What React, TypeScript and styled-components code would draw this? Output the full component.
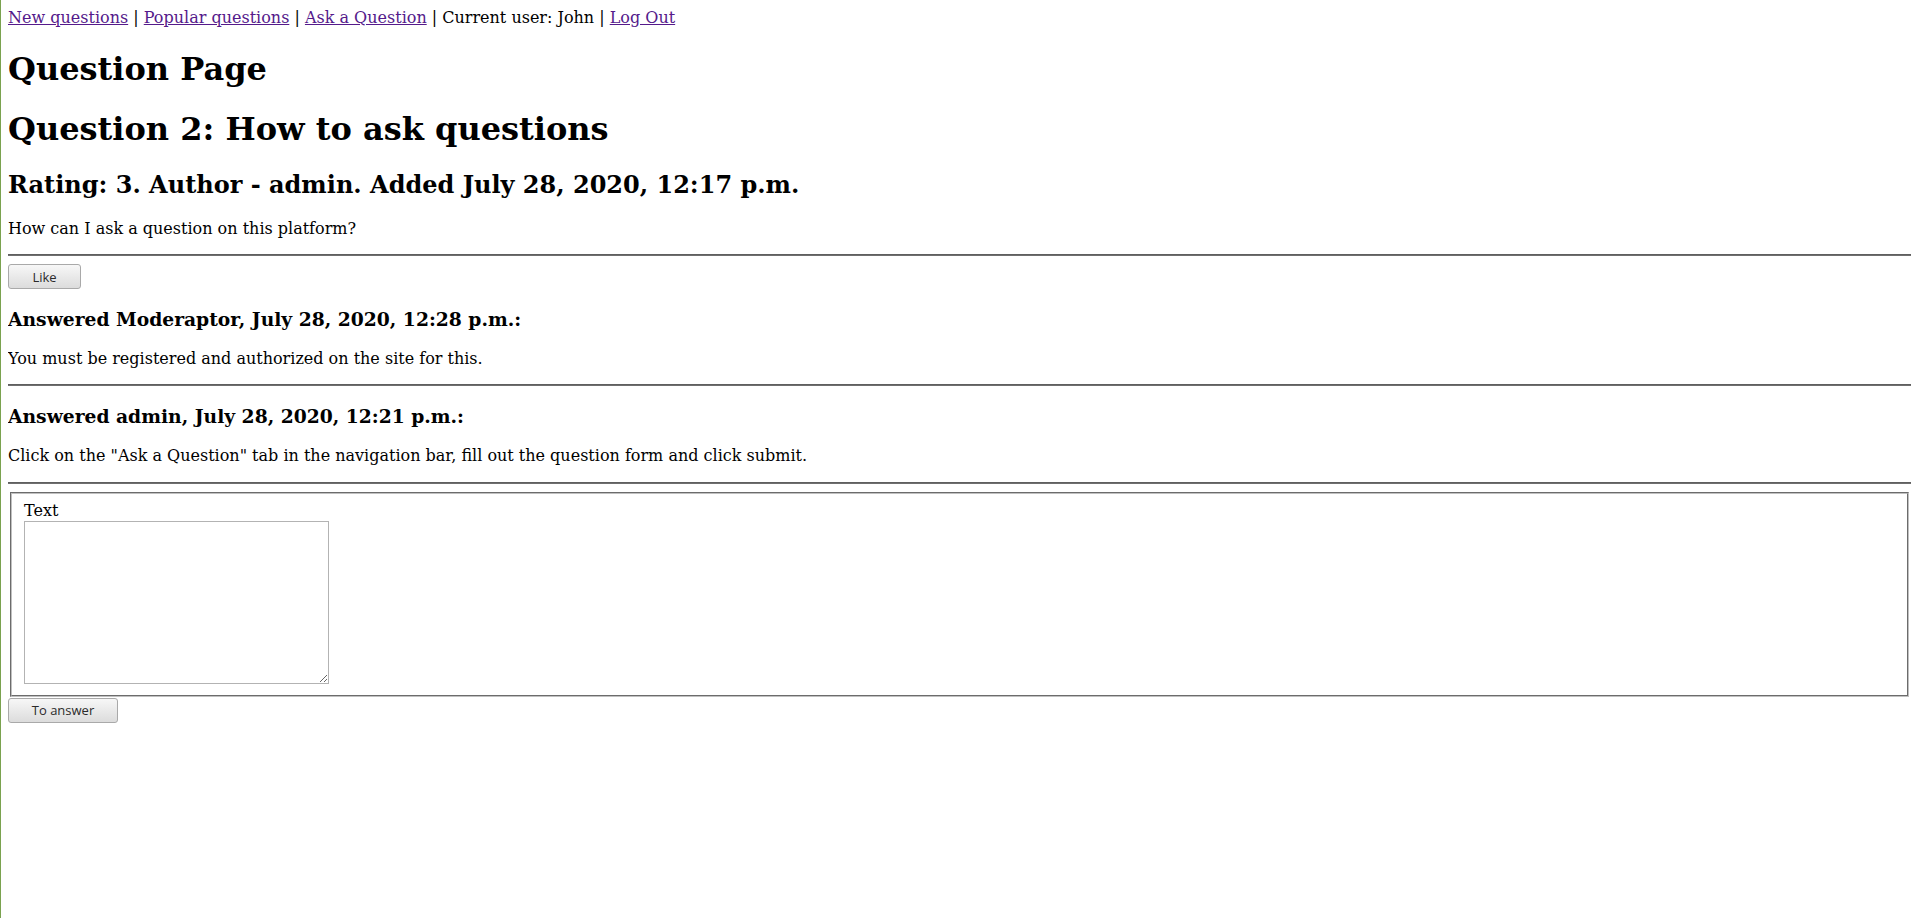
import React from "react";
import styled, { createGlobalStyle } from "styled-components";

const Global = createGlobalStyle`
  html {
    background: linear-gradient(to right, #7aa24f 0, #7aa24f 1px, #ffffff 1px);
    min-height: 100%;
  }
  body {
    margin: 8px;
    font-family: "DejaVu Serif", serif;
    font-size: 16px;
    line-height: 1.2;
    color: #000;
  }
`;

const Nav = styled.div`
  padding-bottom: 1px;
`;

const NavLink = styled.a`
  color: #551a8b;
  text-decoration: underline;
  cursor: pointer;
`;

const Title = styled.h1`
  font-size: 2em;
  line-height: 39px;
  margin: 0.67em 0;
  font-weight: bold;
`;

const Meta = styled.h2`
  font-size: 1.5em;
  margin: 0.83em 0;
  font-weight: bold;
`;

const AnswerHead = styled.h3`
  font-size: 1.17em;
  margin: 1em 0;
  font-weight: bold;
`;

const Para = styled.p`
  margin: 1em 0;
`;

const Rule = styled.hr`
  margin: 0.5em 0;
  height: 0;
  border: 0;
  border-top: 1px solid #5f5f5f;
  border-bottom: 1px solid #6f6f6f;
`;

const LikeForm = styled.form`
  margin: 0 0 3px;
`;

const AnswerForm = styled.form`
  margin: 0;
`;

const Button = styled.button<{ $w: number }>`
  display: block;
  width: ${(p) => p.$w}px;
  height: 25px;
  margin: ${(p) => (p.$w > 100 ? "1px 0 0" : "0")};
  padding: 0;
  font-family: "Open Sans", "DejaVu Sans", sans-serif;
  font-size: 13px;
  color: #2b2b2b;
  background: linear-gradient(#f7f7f7, #dcdcdc);
  border: 1px solid #a9a9a9;
  border-radius: 3px;
`;

const Fieldset = styled.fieldset`
  margin: 0 2px;
  padding: 7px 0.75em 11px;
  border: 2px groove rgb(192, 192, 192);
`;

const Label = styled.label`
  display: block;
  margin-bottom: 1px;
`;

const TextArea = styled.textarea`
  display: block;
  width: 305px;
  height: 163px;
  box-sizing: border-box;
  border: 1px solid #b3b3b3;
  margin: 0;
  font-family: "DejaVu Sans Mono", monospace;
  font-size: 13px;
`;

export default function App() {
  return (
    <>
      <Global />
      <Nav>
        <NavLink>New questions</NavLink> | <NavLink>Popular questions</NavLink> |{" "}
        <NavLink>Ask a Question</NavLink> | Current user: John | <NavLink>Log Out</NavLink>
      </Nav>
      <Title>Question Page</Title>
      <Title>Question 2: How to ask questions</Title>
      <Meta>Rating: 3. Author - admin. Added July 28, 2020, 12:17 p.m.</Meta>
      <Para>How can I ask a question on this platform?</Para>
      <Rule />
      <LikeForm onSubmit={(e) => e.preventDefault()}>
        <Button $w={73}>Like</Button>
      </LikeForm>
      <AnswerHead>Answered Moderaptor, July 28, 2020, 12:28 p.m.:</AnswerHead>
      <Para>You must be registered and authorized on the site for this.</Para>
      <Rule />
      <AnswerHead>Answered admin, July 28, 2020, 12:21 p.m.:</AnswerHead>
      <Para>
        Click on the "Ask a Question" tab in the navigation bar, fill out the question form and
        click submit.
      </Para>
      <Rule />
      <AnswerForm onSubmit={(e) => e.preventDefault()}>
        <Fieldset>
          <Label htmlFor="answer-text">Text</Label>
          <TextArea id="answer-text" />
        </Fieldset>
        <Button $w={110}>To answer</Button>
      </AnswerForm>
    </>
  );
}
